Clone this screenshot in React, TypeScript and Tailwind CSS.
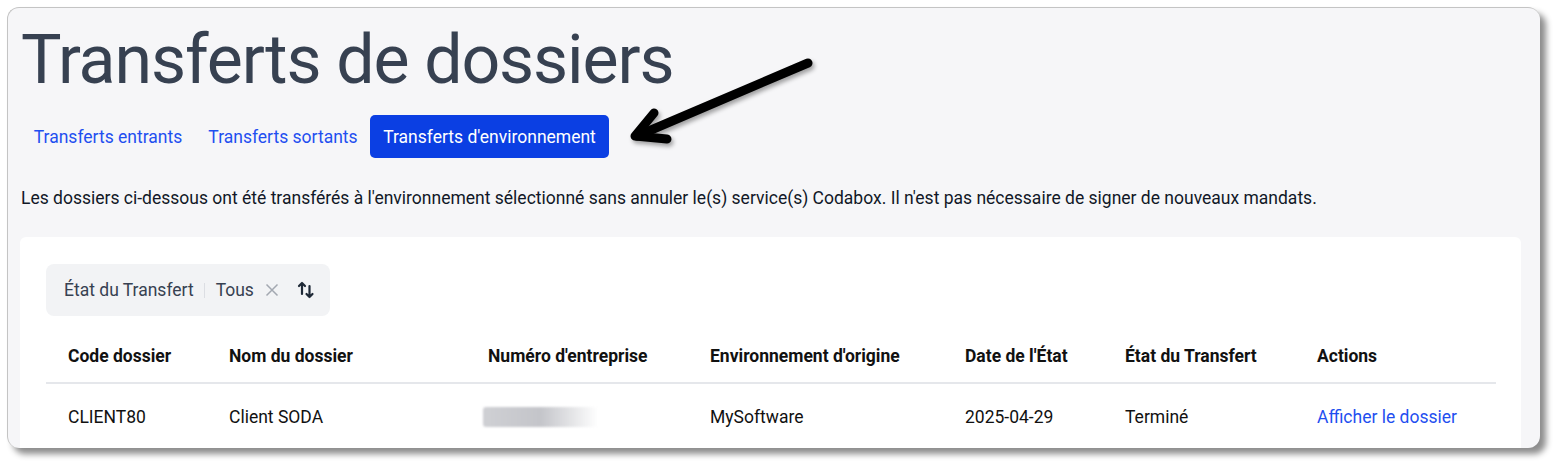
import React from "react";

const cols = [
  { w: "w-[161px]", h: "Code dossier" },
  { w: "w-[259px]", h: "Nom du dossier" },
  { w: "w-[222px]", h: "Numéro d'entreprise" },
  { w: "w-[255px]", h: "Environnement d'origine" },
  { w: "w-[160px]", h: "Date de l'État" },
  { w: "w-[192px]", h: "État du Transfert" },
  { w: "flex-1", h: "Actions" },
];

export default function App() {
  return (
    <div
      className="relative w-[1564px] h-[472px] bg-white overflow-hidden"
      style={{ fontFamily: "Roboto, 'Liberation Sans', sans-serif" }}
    >
      <div className="absolute left-[7px] top-[7px] w-[1533px] h-[441px] rounded-[12px] bg-[#f6f6f8] border-t border-l border-[#c4c4c4] shadow-[6px_6px_6px_rgba(0,0,0,0.45)] overflow-hidden">
        <div className="pl-[12px] pr-[19px]">
          <h1 className="mt-[12px] h-[80px] text-[68px] leading-[80px] tracking-[-1.1px] text-[#374151] pl-[1px] whitespace-nowrap">
            Transferts de dossiers
          </h1>
          <div className="mt-[15px] flex text-[17.5px]">
            <div className="w-[176px] h-[43px] pt-[2px] flex items-center justify-center text-[#1f4ff0] whitespace-nowrap">
              Transferts entrants
            </div>
            <div className="w-[174px] h-[43px] pt-[2px] flex items-center justify-center text-[#1f4ff0] whitespace-nowrap">
              Transferts sortants
            </div>
            <div className="w-[239px] h-[43px] pt-[2px] flex items-center justify-center text-white bg-[#0b3fe3] rounded-[5px] whitespace-nowrap">
              Transferts d'environnement
            </div>
          </div>
          <p className="mt-[27px] text-[17.5px] leading-[26px] text-[#111827] pl-[1px] whitespace-nowrap">
            Les dossiers ci-dessous ont été transférés à l'environnement sélectionné sans annuler le(s) service(s) Codabox. Il n'est pas nécessaire de signer de nouveaux mandats.
          </p>
          <div className="mt-[26px] bg-white rounded-[6px] pl-[26px] pr-[25px] pt-[27px] h-[240px]">
            <div className="inline-flex items-center h-[52px] w-[284px] bg-[#f2f3f5] rounded-[8px] pl-[18px] text-[17.5px] text-[#374151] whitespace-nowrap">
              <span>État du Transfert</span>
              <span className="ml-[10px] mr-[11px] w-px h-[15px] bg-[#dcdee3]" />
              <span>Tous</span>
              <svg className="ml-[11px]" width="14" height="14" viewBox="0 0 14 14">
                <path d="M1.5 1.5 L12.5 12.5 M12.5 1.5 L1.5 12.5" stroke="#a3a8b1" strokeWidth="1.5" />
              </svg>
              <svg className="ml-[18px]" width="18" height="18" viewBox="0 0 18 18" fill="none" stroke="#1f2937" strokeWidth="2.2" strokeLinecap="round" strokeLinejoin="round">
                <path d="M5 13 V2 M2 5 L5 2 L8 5" />
                <path d="M12.5 5 V16 M9.5 13 L12.5 16 L15.5 13" />
              </svg>
            </div>
            <div className="mt-[14px] flex h-[54px] items-center border-b-2 border-[#e5e7eb] text-[17.5px] font-bold text-[#111111] whitespace-nowrap">
              {cols.map((c) => (
                <div key={c.h} className={`${c.w} pl-[22px]`}>
                  {c.h}
                </div>
              ))}
            </div>
            <div className="flex h-[66px] items-center text-[17.5px] text-[#111111] whitespace-nowrap">
              <div className="w-[161px] pl-[22px]">CLIENT80</div>
              <div className="w-[259px] pl-[22px]">Client SODA</div>
              <div className="w-[222px] pl-[17px]">
                <div className="w-[115px] h-[20px] rounded-[3px] bg-gradient-to-r from-[#cfd0d4] via-[#c4c5ca] to-transparent blur-[1px]" />
              </div>
              <div className="w-[255px] pl-[22px]">MySoftware</div>
              <div className="w-[160px] pl-[22px]">2025-04-29</div>
              <div className="w-[192px] pl-[22px]">Terminé</div>
              <div className="flex-1 pl-[22px] text-[#1f4ff0]">Afficher le dossier</div>
            </div>
          </div>
        </div>
      </div>
      <svg className="absolute left-0 top-0 pointer-events-none" width="1564" height="472">
        <defs>
          <filter id="sh" x="-20%" y="-20%" width="140%" height="140%">
            <feDropShadow dx="2" dy="3" stdDeviation="2" floodColor="#000" floodOpacity="0.35" />
          </filter>
        </defs>
        <g filter="url(#sh)" stroke="#000" strokeWidth="9" strokeLinecap="round" strokeLinejoin="round" fill="none">
          <path d="M808 63 L637 136" />
          <path d="M654 113 L635 136 L667 139" />
        </g>
      </svg>
    </div>
  );
}
